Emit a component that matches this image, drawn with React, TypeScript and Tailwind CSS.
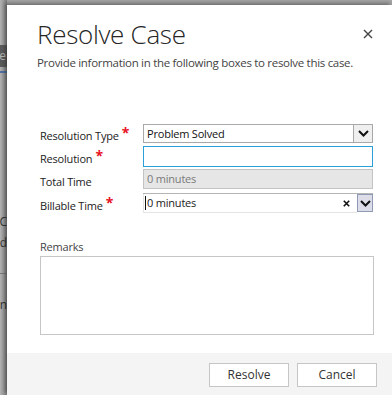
import React from "react";

const Req = () => (
  <span className="ml-[3px] text-[14px] font-bold leading-none text-[#e81123] relative top-[-2px]">*</span>
);

const Chevron = ({ className = "" }: { className?: string }) => (
  <svg width="11" height="7" viewBox="0 0 11 7" className={className}>
    <path d="M1 1 L5.5 5.5 L10 1" fill="none" stroke="#111" strokeWidth="2" />
  </svg>
);

// cut-off words of the page that sits behind the dialog
const Backdrop = () => (
  <div className="w-[7px] shrink-0 h-full flex flex-col bg-gradient-to-r from-[#b3b3b3] via-[#9a9a9a] to-[#7e7e7e] text-[12px] leading-none">
    <div className="h-[45px]" />
    <div className="h-[22px] bg-[#5b5b5b] flex justify-end items-center overflow-hidden whitespace-nowrap text-[#b8b8b8]">
      <span className="pr-[1px]">Case</span>
    </div>
    <div className="h-[4px]" />
    <div className="h-[2px] bg-[#4f6f9c]" />
    <div className="h-[143px]" />
    <div className="h-[12px] flex justify-end overflow-hidden whitespace-nowrap text-[#333]">
      <span>ABC</span>
    </div>
    <div className="h-[9px]" />
    <div className="h-[10px] flex justify-end overflow-hidden whitespace-nowrap text-[#333]">
      <span>Owned</span>
    </div>
    <div className="h-[26px]" />
    <div className="h-[1px] bg-[#777]" />
    <div className="h-[25px]" />
    <div className="h-[10px] flex justify-end overflow-hidden whitespace-nowrap text-[#333]">
      <span>Open</span>
    </div>
  </div>
);

export default function App() {
  return (
    <div className="w-[392px] h-[395px] overflow-hidden flex bg-[#a6a6a6] font-['Open_Sans','Noto_Sans',sans-serif]">
      <Backdrop />

      <div className="flex-1 mt-[5px] bg-white flex flex-col shadow-[-2px_-2px_4px_rgba(0,0,0,0.35)]">
        {/* header */}
        <div className="pl-[30px] pr-[19px] pt-[12px] flex items-start">
          <div className="flex-1">
            <h1 className="text-[26px] font-light leading-[34px] text-[#262626] tracking-[-0.3px]">Resolve Case</h1>
            <p className="mt-[4px] text-[11.5px] leading-[16px] text-[#444] tracking-[-0.3px] whitespace-nowrap">
              Provide information in the following boxes to resolve this case.
            </p>
          </div>
          <button className="mt-[12px] w-[10px] h-[10px] flex items-center justify-center">
            <svg width="10" height="10" viewBox="0 0 10 10">
              <path d="M1 1 L9 9 M9 1 L1 9" stroke="#444" strokeWidth="1.4" />
            </svg>
          </button>
        </div>

        {/* form */}
        <div className="pl-[33px] pr-[19px] mt-[53px] flex flex-col text-[11px] tracking-[-0.2px] text-[#222]">
          <div className="flex items-center h-[19px]">
            <div className="w-[103px] shrink-0 mt-[6px] flex items-start">Resolution Type<Req /></div>
            <div className="flex-1 h-full flex border border-[#a9a9a9]">
              <span className="flex-1 pl-[3px] leading-[17px] text-[#111]">Problem Solved</span>
              <span className="w-[19px] border-l border-[#a9a9a9] bg-[#efefef] flex items-center justify-center">
                <Chevron />
              </span>
            </div>
          </div>

          <div className="flex items-center h-[21px] mt-[3px]">
            <div className="w-[103px] shrink-0 mt-[6px] flex items-start">Resolution<Req /></div>
            <div className="flex-1 h-full border border-[#2a9fd8]" />
          </div>

          <div className="flex items-center h-[20px] mt-[2px]">
            <div className="w-[103px] shrink-0 mt-[6px]">Total Time</div>
            <div className="flex-1 h-full border border-[#c3c3c3] bg-[#e6e6e6] pl-[3px] leading-[18px] text-[#7a7a7a]">
              0 minutes
            </div>
          </div>

          <div className="flex items-center h-[20px] mt-[4px]">
            <div className="w-[103px] shrink-0 mt-[6px] flex items-start">Billable Time<Req /></div>
            <div className="flex-1 h-full flex border-t border-[#b5b5b5]">
              <div className="flex-1 flex items-center border-l border-b border-[#e4e4e4]">
                <span className="w-[1px] h-[14px] bg-[#111] ml-[1px]" />
                <span className="pl-[1px] leading-[18px]">0 minutes</span>
                <span className="ml-auto mr-[7px]">
                  <svg width="7" height="7" viewBox="0 0 7 7">
                    <path d="M0.8 0.8 L6.2 6.2 M6.2 0.8 L0.8 6.2" stroke="#111" strokeWidth="1.6" />
                  </svg>
                </span>
              </div>
              <span className="w-[16px] h-[18px] border border-[#8f9bb5] bg-[#dcdde9] flex items-center justify-center">
                <Chevron />
              </span>
            </div>
          </div>

          <div className="mt-[27px] text-[#444] leading-[14px] text-[11px]">Remarks</div>
          <div className="mt-[2px] h-[79px] border border-[#c6c6c6] mr-[-1px]" />
        </div>

        {/* footer */}
        <div className="mt-auto h-[42px] bg-[#f4f4f4] flex items-start justify-end pr-[15px] pt-[10px] gap-[8px]">
          <button className="w-[80px] h-[24px] bg-white border border-[#c6c6c6] text-[12px] text-[#333]">Resolve</button>
          <button className="w-[80px] h-[24px] bg-white border border-[#c6c6c6] text-[12px] text-[#333]">Cancel</button>
        </div>
      </div>
    </div>
  );
}
